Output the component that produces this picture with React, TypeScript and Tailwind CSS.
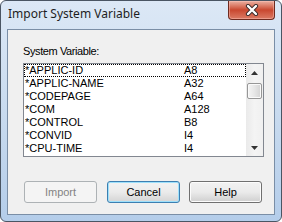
import React from 'react';

const rows = [
  { name: '*APPLIC-ID', format: 'A8' },
  { name: '*APPLIC-NAME', format: 'A32' },
  { name: '*CODEPAGE', format: 'A64' },
  { name: '*COM', format: 'A128' },
  { name: '*CONTROL', format: 'B8' },
  { name: '*CONVID', format: 'I4' },
  { name: '*CPU-TIME', format: 'I4' },
];

const sans = { fontFamily: '"Liberation Sans", Arial, sans-serif' };

function CloseButton() {
  return (
    <div className="mr-[6px] flex h-[19px] w-[47px] items-center justify-center rounded-b-[4px] border border-t-0 border-[#6e2a1f] bg-gradient-to-b from-[#eab0a2] via-[#c9472f] to-[#db7a64] shadow-[inset_0_0_0_1px_rgba(255,200,190,0.45)]">
      <svg width="14" height="12" viewBox="0 0 14 12">
        <path d="M3 2 L11 10 M11 2 L3 10" stroke="#3a2a2a" strokeWidth="4.2" strokeLinecap="round" />
        <path d="M3 2 L11 10 M11 2 L3 10" stroke="#ffffff" strokeWidth="2.4" strokeLinecap="round" />
      </svg>
    </div>
  );
}

function ScrollBar() {
  return (
    <div className="flex h-full w-[17px] flex-col bg-gradient-to-r from-[#eaeaea] via-[#f4f4f4] to-[#f0f0f0]">
      <div className="flex h-[17px] items-center justify-center">
        <svg width="7" height="4" viewBox="0 0 7 4">
          <path d="M3.5 0 L7 4 L0 4 Z" fill="#333" />
        </svg>
      </div>
      <div className="mt-[2px] ml-[1px] h-[16px] w-[15px] rounded-[2px] border border-[#979797] bg-gradient-to-r from-[#f5f5f5] via-[#e6e6e6] to-[#d3d3d3] shadow-[inset_0_0_0_1px_#fafafa]"></div>
      <div className="flex-1"></div>
      <div className="flex h-[17px] items-center justify-center">
        <svg width="7" height="4" viewBox="0 0 7 4">
          <path d="M0 0 L7 0 L3.5 4 Z" fill="#333" />
        </svg>
      </div>
    </div>
  );
}

function Button({ label, variant }: { label: string; variant: 'default' | 'normal' | 'disabled' }) {
  const cls =
    variant === 'disabled'
      ? 'border-[#adb2b5] bg-[#f4f4f4] text-[#838383]'
      : variant === 'default'
      ? 'border-[#3c7fb1] bg-gradient-to-b from-[#f2f2f2] via-[#ebebeb] to-[#d4d4d4] text-black shadow-[inset_0_0_0_1px_#9ee0fb]'
      : 'border-[#707070] bg-gradient-to-b from-[#f2f2f2] via-[#ebebeb] to-[#cfcfcf] text-black shadow-[inset_0_0_0_1px_#fcfcfc]';
  return (
    <div
      className={`flex h-[22px] w-[73px] items-center justify-center rounded-[3px] border text-[11px] ${cls}`}
      style={sans}
    >
      {label}
    </div>
  );
}

export default function App() {
  return (
    <div className="flex h-[222px] w-[282px] flex-col rounded-[6px] border border-[#4a5563] bg-gradient-to-b from-[#dce8f6] via-[#c9dbef] to-[#b4cdea]">
      <div className="flex h-[28px] items-start justify-between">
        <div
          className="pl-[7px] pt-[5px] text-[12px] leading-[16px] text-[#1e1e1e]"
          style={{ fontFamily: '"Noto Sans", "Open Sans", sans-serif' }}
        >
          Import System Variable
        </div>
        <CloseButton />
      </div>
      <div className="mx-[6px] h-[186px] border border-[#7a8ea6] bg-[#f0f0f0]">
        <div className="flex flex-col pl-[15px] pt-[15px]">
          <div className="text-[11px] leading-[13px] tracking-[-0.4px] text-black" style={sans}>
            System Variable:
          </div>
          <div className="mt-[5px] flex h-[94px] w-[241px] border border-[#828790] bg-white">
            <div className="flex flex-1 flex-col">
              {rows.map((r, i) => (
                <div
                  key={r.name}
                  className={`flex h-[13px] items-center text-[11px] leading-[13px] text-black ${
                    i === 0 ? 'border border-dotted border-black' : 'border border-transparent'
                  }`}
                  style={sans}
                >
                  <span className="w-[159px]">{r.name}</span>
                  <span>{r.format}</span>
                </div>
              ))}
            </div>
            <ScrollBar />
          </div>
          <div className="mt-[24px] flex">
            <div className="ml-[1px]">
              <Button label="Import" variant="disabled" />
            </div>
            <div className="ml-[10px]">
              <Button label="Cancel" variant="default" />
            </div>
            <div className="ml-[9px]">
              <Button label="Help" variant="normal" />
            </div>
          </div>
        </div>
      </div>
    </div>
  );
}
